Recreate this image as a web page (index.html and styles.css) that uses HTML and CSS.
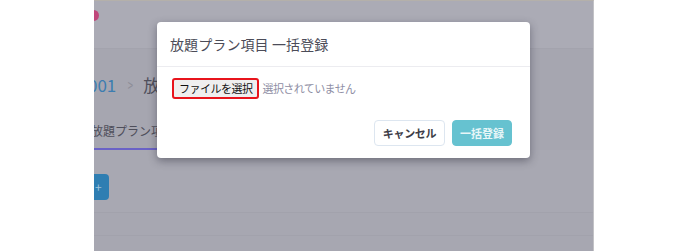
FILE: index.html
```html
<!DOCTYPE html>
<html>
<head>
	<meta charset="utf-8">
	<title>一括登録</title>
	<link rel="stylesheet" href="styles.css">
</head>
<body>
	<div class="shot">
		<div class="top-bar"><span class="dot"></span></div>
		<div class="page">
			<div class="crumb"><span class="crumb-link">001</span><span class="crumb-sep">&gt;</span><span class="crumb-cur">放題</span></div>
			<div class="tabs"><span class="tab-on">放題プラン項目</span></div>
			<div class="tool-row"><span class="add-btn">+</span></div>
			<div class="row-line"></div>
			<div class="row-line"></div>
		</div>

		<!-- モーダル -->
		<div class="modal">
			<div class="modal-head">放題プラン項目 一括登録</div>
			<div class="modal-body">
				<span class="file-btn">ファイルを選択</span>
				<span class="file-none">選択されていません</span>
			</div>
			<div class="modal-foot">
				<span class="btn btn-cancel">キャンセル</span>
				<span class="btn btn-ok">一括登録</span>
			</div>
		</div>
	</div>
</body>
</html>
```

FILE: styles.css
```css
* { margin: 0; padding: 0; box-sizing: border-box; }
body { background: #fff; font-family: "Noto Sans CJK JP", "Noto Sans", sans-serif; }

/* 背景の画面（暗くなっている） */
.shot { position: relative; margin-left: 94px; width: 500px; height: 251px; background: #a6a6b0; overflow: hidden; border-right: 1px solid #c2c2c6; border-top: 1px solid #b4b0aa; }
.top-bar { height: 48px; background: #ababb5; border-bottom: 1px solid #a3a3ad; position: relative; }
.dot { position: absolute; left: -6px; top: 9px; width: 11px; height: 11px; border-radius: 50%; background: #c0467a; }

.page { padding-top: 17px; }
.crumb { display: flex; align-items: center; width: 63px; height: 36px; font-size: 17px; color: #50505c; white-space: nowrap; overflow: hidden; }
.crumb-link { color: #3c7db0; margin-left: -6px; }
.crumb-sep { color: #8e8e98; margin: 0 8px 0 10px; font-size: 16px; transform: scaleX(0.6); }
.tabs { margin-top: 10px; height: 38px; border-bottom: 2px solid #6a62c6; width: 63px; display: flex; align-items: center; overflow: hidden; }
.tab-on { font-size: 12px; color: #4e4e5a; white-space: nowrap; margin-left: -3px; }
.tool-row { height: 63px; background: #a8a8b2; display: flex; align-items: center; border-bottom: 1px solid #a2a2ac; }
.add-btn { display: block; width: 15px; height: 26px; margin-top: 12px; background: #2f7eb2; border-radius: 0 4px 4px 0; color: #9fc3dc; font-size: 12px; line-height: 26px; text-indent: 1px; }
.row-line { height: 23px; border-bottom: 1px solid #a2a2ac; background: #a7a7b1; }

/* モーダル */
.modal { position: absolute; left: 63px; top: 21px; width: 373px; height: 136px; background: #fff; border-radius: 4px; box-shadow: 0 3px 8px rgba(40, 40, 55, 0.45); }
.modal-head { height: 45px; padding: 12px 0 0 13px; font-size: 14px; letter-spacing: 0.1px; color: #4c4c58; border-bottom: 1px solid #ececf0; }
.modal-body { display: flex; padding: 11px 0 0 15px; height: 45px; align-items: flex-start; }
.file-btn { display: block; height: 21px; padding: 0 4px 0 5px; border: 2px solid #e8141c; border-radius: 3px; background: #efefef; font-size: 11px; letter-spacing: -0.5px; line-height: 17px; color: #111; }
.file-none { margin-left: 4px; font-size: 11px; letter-spacing: -0.6px; line-height: 21px; color: #8e8ea4; }
.modal-foot { display: flex; justify-content: flex-end; gap: 7px; padding: 8px 18px 0 0; }
.btn { display: block; height: 26px; border-radius: 4px; font-size: 11px; line-height: 24px; text-align: center; }
.btn-cancel { width: 71px; border: 1px solid #dde6f0; color: #3c3c46; font-weight: bold; letter-spacing: -0.3px; }
.btn-ok { width: 60px; border: 1px solid #66c2d0; background: #66c2d0; color: #e8f6f8; font-weight: bold; }
```
